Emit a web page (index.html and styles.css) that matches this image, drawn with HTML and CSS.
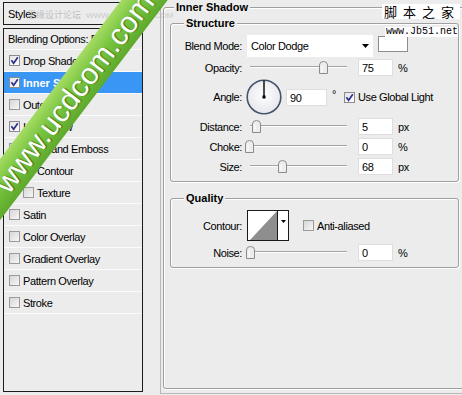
FILE: index.html
```html
<!DOCTYPE html>
<html>
<head>
<meta charset="utf-8">
<link rel="stylesheet" href="styles.css">
</head>
<body>
<div class="dialog">
  <aside class="styles-panel">
    <div class="styles-head">Styles</div>
    <ul class="style-list">
      <li class="blend">Blending Options: Default</li>
      <li><span class="cb on"><svg viewBox="0 0 9 9" width="9" height="9"><path d="M1.4 4.2 L3.6 7.2 L7.8 1.2" fill="none" stroke="#2f2f8e" stroke-width="1.7"/></svg></span>Drop Shadow</li>
      <li class="active"><span class="cb on"><svg viewBox="0 0 9 9" width="9" height="9"><path d="M1.4 4.2 L3.6 7.2 L7.8 1.2" fill="none" stroke="#2f2f8e" stroke-width="1.7"/></svg></span>Inner Shadow</li>
      <li><span class="cb"></span>Outer Glow</li>
      <li><span class="cb on"><svg viewBox="0 0 9 9" width="9" height="9"><path d="M1.4 4.2 L3.6 7.2 L7.8 1.2" fill="none" stroke="#2f2f8e" stroke-width="1.7"/></svg></span>Inner Glow</li>
      <li><span class="cb"></span>Bevel and Emboss</li>
      <li class="sub"><span class="cb"></span>Contour</li>
      <li class="sub"><span class="cb"></span>Texture</li>
      <li><span class="cb"></span>Satin</li>
      <li><span class="cb"></span>Color Overlay</li>
      <li><span class="cb"></span>Gradient Overlay</li>
      <li><span class="cb"></span>Pattern Overlay</li>
      <li><span class="cb"></span>Stroke</li>
    </ul>
  </aside>

  <main class="settings">
    <fieldset class="group outer">
      <legend>Inner Shadow</legend>

      <fieldset class="group inner structure">
        <legend>Structure</legend>

        <div class="row blend-row">
          <span class="lbl">Blend Mode:</span>
          <div class="select"><span>Color Dodge</span><svg width="7" height="4" viewBox="0 0 7 4"><polygon points="0,0 7,0 3.5,4" fill="#000"/></svg></div>
          <span class="swatch"></span>
        </div>

        <div class="row r-slider r-first">
          <span class="lbl">Opacity:</span>
          <div class="slider"><span class="track"></span><svg class="thumb" style="left:76px" width="9" height="13" viewBox="0 0 9 13"><path d="M0.5 12.5 V4 Q0.5 0.5 4.5 0.5 Q8.5 0.5 8.5 4 V12.5 Z" fill="#ededed" stroke="#8c8c8c"/><path d="M3 4.5 V11" stroke="#fff"/></svg></div>
          <span class="num">75</span><span class="unit">%</span>
        </div>

        <div class="row angle-row">
          <span class="lbl">Angle:</span>
          <svg class="dial" width="36" height="36" viewBox="0 0 36 36">
            <defs><radialGradient id="dg" cx="50%" cy="45%" r="60%"><stop offset="0" stop-color="#ffffff"/><stop offset="1" stop-color="#e2e5ea"/></radialGradient></defs>
            <circle cx="18" cy="18" r="16.8" fill="url(#dg)" stroke="#46536c" stroke-width="1.6"/>
            <line x1="18" y1="18" x2="18" y2="1.5" stroke="#000" stroke-width="1.4"/>
            <rect x="16.5" y="16.5" width="3" height="3" fill="#000"/>
          </svg>
          <span class="num wide">90</span>
          <span class="deg">°</span>
          <span class="cb on gl"><svg viewBox="0 0 9 9" width="9" height="9"><path d="M1.4 4.2 L3.6 7.2 L7.8 1.2" fill="none" stroke="#2f2f8e" stroke-width="1.7"/></svg></span>
          <span class="cb-text">Use Global Light</span>
        </div>

        <div class="row r-slider r-first">
          <span class="lbl">Distance:</span>
          <div class="slider"><span class="track"></span><svg class="thumb" style="left:9px" width="9" height="13" viewBox="0 0 9 13"><path d="M0.5 12.5 V4 Q0.5 0.5 4.5 0.5 Q8.5 0.5 8.5 4 V12.5 Z" fill="#ededed" stroke="#8c8c8c"/><path d="M3 4.5 V11" stroke="#fff"/></svg></div>
          <span class="num">5</span><span class="unit">px</span>
        </div>

        <div class="row r-slider">
          <span class="lbl">Choke:</span>
          <div class="slider"><span class="track"></span><svg class="thumb" style="left:2px" width="9" height="13" viewBox="0 0 9 13"><path d="M0.5 12.5 V4 Q0.5 0.5 4.5 0.5 Q8.5 0.5 8.5 4 V12.5 Z" fill="#ededed" stroke="#8c8c8c"/><path d="M3 4.5 V11" stroke="#fff"/></svg></div>
          <span class="num">0</span><span class="unit">%</span>
        </div>

        <div class="row r-slider">
          <span class="lbl">Size:</span>
          <div class="slider"><span class="track"></span><svg class="thumb" style="left:35px" width="9" height="13" viewBox="0 0 9 13"><path d="M0.5 12.5 V4 Q0.5 0.5 4.5 0.5 Q8.5 0.5 8.5 4 V12.5 Z" fill="#ededed" stroke="#8c8c8c"/><path d="M3 4.5 V11" stroke="#fff"/></svg></div>
          <span class="num">68</span><span class="unit">px</span>
        </div>
      </fieldset>

      <fieldset class="group inner quality">
        <legend>Quality</legend>
        <div class="row contour-row">
          <span class="lbl">Contour:</span>
          <div class="contour">
            <svg class="curve" width="29" height="29" viewBox="0 0 29 29"><rect width="29" height="29" fill="#fff"/><polygon points="2,29 29,29 29,0" fill="#8e8e8e"/></svg>
            <span class="c-arrow"><svg width="5" height="3" viewBox="0 0 5 3"><polygon points="0,0 5,0 2.5,3" fill="#000"/></svg></span>
          </div>
          <span class="cb aa"></span>
          <span class="cb-text">Anti-aliased</span>
        </div>
        <div class="row r-slider r-noise">
          <span class="lbl">Noise:</span>
          <div class="slider"><span class="track"></span><svg class="thumb" style="left:3px" width="9" height="13" viewBox="0 0 9 13"><path d="M0.5 12.5 V4 Q0.5 0.5 4.5 0.5 Q8.5 0.5 8.5 4 V12.5 Z" fill="#ededed" stroke="#8c8c8c"/><path d="M3 4.5 V11" stroke="#fff"/></svg></div>
          <span class="num">0</span><span class="unit">%</span>
        </div>
      </fieldset>
    </fieldset>
  </main>
</div>

<div class="wm-missyuan"><span class="cn">思缘设计论坛</span><span class="en">WWW.MISSYUAN.COM</span></div>
<div class="wm-jb"><span class="cn">脚本之家</span><span class="url">www.Jb51.net</span></div>
<div class="wm-band">www.ucdcom.com</div>
</body>
</html>
```
FILE: styles.css
```css
* { box-sizing: border-box; }
html, body { margin: 0; padding: 0; }
body {
  width: 462px;
  height: 395px;
  overflow: hidden;
  position: relative;
  background: #ececec;
  font-family: "Liberation Sans", Arial, sans-serif;
  font-size: 11px;
  color: #000;
}

.dialog { display: flex; height: 395px; }

/* left styles list */
.styles-panel {
  width: 140px;
  flex: none;
  margin: 2px 0 0 3px;
  display: flex;
  flex-direction: column;
}
.styles-head {
  height: 23px;
  border: 1px solid #1c1c1c;
  padding-left: 4px;
  line-height: 22px;
  letter-spacing: -0.3px;
}
.style-list {
  list-style: none;
  margin: 3px 0 0;
  padding: 0;
  height: 364px;
  border: 1px solid #1c1c1c;
  overflow: hidden;
}
.style-list li {
  height: 22px;
  display: flex;
  align-items: center;
  padding-left: 5px;
  border-bottom: 1px solid #fbfbfb;
  white-space: nowrap;
  overflow: hidden;
  letter-spacing: -0.4px;
}
.style-list li.blend { height: 21px; padding-left: 4px; }
.style-list li.sub { padding-left: 19px; }
.style-list li.active {
  background: #3a96f4;
  color: #fff;
  font-weight: bold;
  letter-spacing: 0;
}

.cb {
  width: 11px;
  height: 11px;
  flex: none;
  margin-right: 3px;
  border: 1px solid #9a9a9a;
  background: linear-gradient(135deg, #d6d6d6, #f7f7f7);
  display: flex;
  align-items: center;
  justify-content: center;
}
.cb.on { background: linear-gradient(135deg, #e4e4e4, #ffffff); border-color: #8c8c8c; }
.cb svg { display: block; }

/* right settings */
.settings {
  flex: 1;
  min-width: 0;
  margin-left: 17px;
  height: 394px;
  padding: 0 0 4px 2px;
  border-left: 1px solid #b8b8b8;
  border-bottom: 1px solid #b8b8b8;
  display: flex;
}

fieldset.group {
  margin: 0;
  min-width: 0;
  border: 1px solid #9f9f9f;
  border-radius: 3px;
  box-shadow: inset 1px 1px 0 #fff, 1px 1px 0 #fff;
}
fieldset.group > legend {
  font-weight: bold;
  line-height: 14px;
  padding: 0 2px;
  background: #ececec;
}

fieldset.outer {
  flex: none;
  width: 305px;
  height: 389px;
  padding: 2px 0 0 6px;
}
fieldset.outer > legend { margin-left: 4px; }

fieldset.inner { width: 289px; padding: 5px 0 6px 0; }
fieldset.inner > legend { margin-left: 13px; }
fieldset.quality { margin-top: 9px; padding-bottom: 6px; }

.row { display: flex; align-items: center; height: 17px; letter-spacing: -0.4px; }
.lbl { width: 71px; flex: none; text-align: right; margin-right: 5px; }

.blend-row { height: 22px; align-items: flex-start; }
.blend-row .lbl { line-height: 22px; }
.select {
  width: 126px;
  height: 22px;
  background: #fff;
  display: flex;
  align-items: center;
  justify-content: space-between;
  padding: 0 4px 0 4px;
}
.select svg { display: block; }
.swatch {
  width: 30px;
  height: 16px;
  margin: 1px 0 0 5px;
  background: #fff;
  border: 1px solid #8d8d8d;
}

.r-slider { margin-top: 3px; }
.r-first { margin-top: 2px; }
.slider { position: relative; width: 104px; height: 17px; flex: none; }
.track {
  position: absolute;
  left: 3px;
  right: 4px;
  top: 7px;
  height: 2px;
  border-top: 1px solid #a3a3a3;
  border-bottom: 1px solid #ffffff;
}
.thumb { position: absolute; top: 2px; margin-left: -4.5px; display: block; }

.num {
  width: 35px;
  height: 17px;
  flex: none;
  margin-left: 7px;
  padding-left: 3px;
  line-height: 16px;
  background: #fff;
  border: 1px solid #dedede;
}
.num.wide { width: 41px; margin-left: 4px; }
.unit { margin-left: 5px; }

.angle-row { height: 38px; margin-top: 2px; }
.angle-row .lbl { margin-right: 4px; }
.dial { display: block; flex: none; }
.deg { margin-left: 5px; align-self: flex-start; margin-top: 10px; }
.cb.gl { margin-left: 8px; margin-right: 3px; }
.cb-text { white-space: nowrap; }

.contour-row { height: 31px; }
.contour {
  width: 42px;
  height: 31px;
  flex: none;
  display: flex;
  border: 1px solid #1a1a1a;
  background: #fff;
}
.curve { display: block; }
.c-arrow {
  flex: 1;
  border-left: 1px solid #1a1a1a;
  display: flex;
  justify-content: center;
  padding-top: 9px;
}
.c-arrow svg { display: block; }
.cb.aa { margin-left: 14px; }
.r-noise { margin-top: 3px; }

/* watermarks */
.wm-missyuan {
  position: absolute;
  left: 27px;
  top: 9px;
  display: flex;
  align-items: center;
  color: rgba(150, 150, 150, 0.55);
  white-space: nowrap;
}
.wm-missyuan .cn { font-family: "Noto Sans CJK SC", sans-serif; font-size: 9px; line-height: 12px; }
.wm-missyuan .en { margin-left: 5px; font-size: 8px; color: rgba(150, 150, 150, 0.45); }

.wm-jb {
  position: absolute;
  top: 4px;
  right: 4px;
  display: flex;
  flex-direction: column;
  align-items: flex-end;
  gap: 8px;
}
.wm-jb .cn {
  background: #fff;
  font-family: "Noto Sans CJK SC", sans-serif;
  font-size: 13px;
  line-height: 15px;
  letter-spacing: 6px;
  padding-left: 2px;
  margin-right: -2px;
}
.wm-jb .url {
  background: #fff;
  font-family: "Liberation Mono", monospace;
  font-size: 10px;
  line-height: 10px;
  padding-left: 1px;
}

.wm-band {
  position: absolute;
  left: -86px;
  top: 74px;
  width: 320px;
  height: 37px;
  transform: rotate(-52.7deg);
  background: linear-gradient(#a6dc64, #79c43e 45%, #5ea92d);
  color: #fff;
  font-family: "Liberation Sans", Arial, sans-serif;
  font-size: 30px;
  line-height: 37px;
  text-align: center;
  text-shadow: 1px 1px 1px rgba(30, 80, 10, 0.6);
}
```
